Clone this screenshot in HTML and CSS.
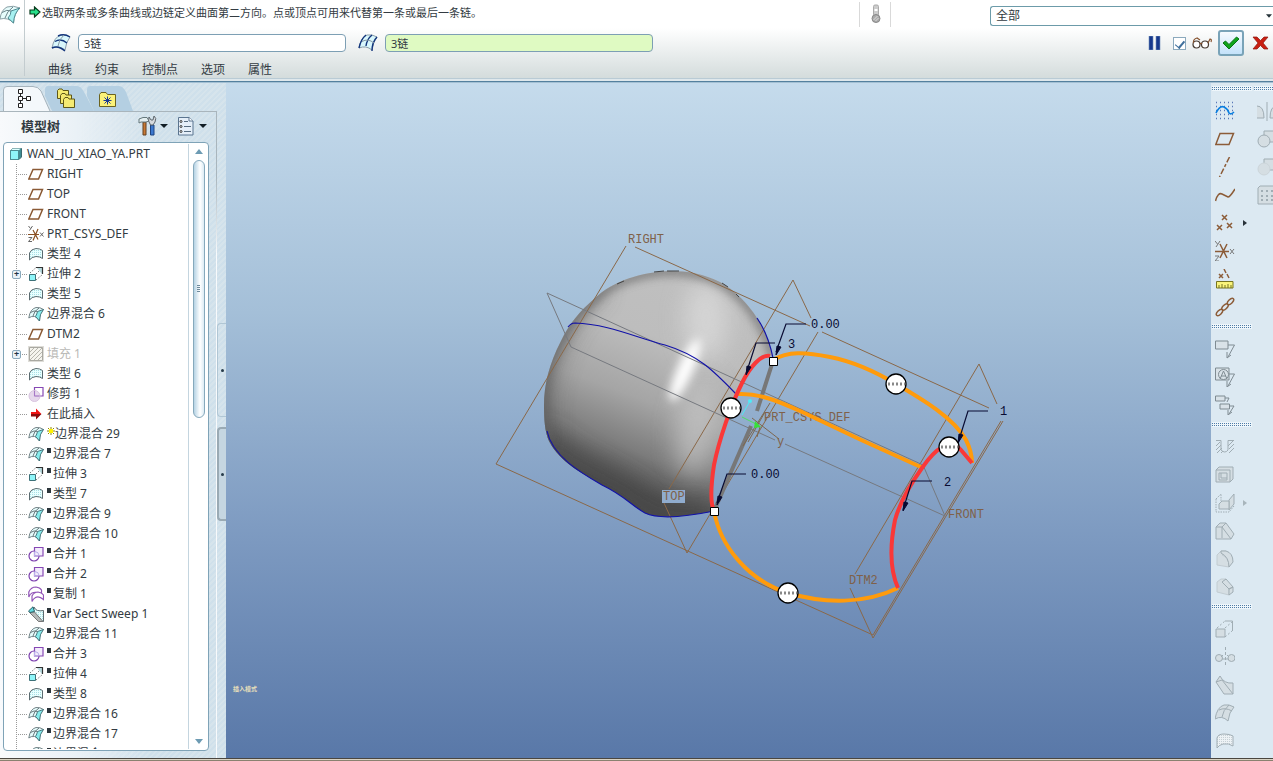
FILE: index.html
```html
<!DOCTYPE html>
<html lang="zh-CN">
<head>
<meta charset="utf-8">
<title>WAN_JU_XIAO_YA.PRT</title>
<link rel="stylesheet" href="styles.css">
</head>
<body>
<svg class="defs" aria-hidden="true">
  <defs>
    <pattern id="dots" width="2" height="2" patternUnits="userSpaceOnUse"><rect width="2" height="2" fill="#e8ffff"/><rect width="1" height="1" fill="#a9dfe4"/></pattern>
    <pattern id="graydots" width="2" height="2" patternUnits="userSpaceOnUse"><rect width="2" height="2" fill="#edf2f5"/><rect width="1" height="1" fill="#c6d0d6"/></pattern>
  </defs>
  <symbol id="i-part" viewBox="0 0 16 16"><path d="M2.500 4.500L5 2.500H13.500V11L11 13.500H2.500Z" fill="#3f8d94" stroke="#3a6a70"/><path d="M2.500 4.500H10.500V13.500H2.500Z" fill="#8ff5f8" stroke="#4c8c92"/><path d="M3 4L5 2.500H13L11 4Z" fill="#dff"/></symbol>
  <symbol id="i-plane" viewBox="0 0 16 16"><path d="M5 3.500H14.500L10.500 13H.800Z" fill="none" stroke="#8a5a35" stroke-width="1.500"/></symbol>
  <symbol id="i-csys" viewBox="0 0 16 16"><path d="M0 8.500H11M5 4L10 13.500M10 3L5 14.500" stroke="#8a5022" stroke-width="1.200"/><path d="M.500 0L2.500 2.500M4.500 0L1.500 4.500M12 6.500L15.500 10.500M15.500 6.500L12 10.500M.500 11.500H4L.500 15.500H4" fill="none" stroke="#666"/></symbol>
  <symbol id="i-style" viewBox="0 0 16 16"><path d="M1.500 14V7Q3 3 8 2.500Q12 2.500 14.500 4.500V12.500Q12 10.500 8 10.500Q3.500 11 1.500 14Z" fill="url(#dots)" stroke="#5b6b70"/></symbol>
  <symbol id="i-extrude" viewBox="0 0 16 16"><path d="M1.500 8.500H7.500V14.500H1.500Z" fill="#8ff5f8" stroke="#3d7078"/><path d="M2 7L8 1.500M8 14L14 9M8 8L13 3" fill="none" stroke="#777" stroke-dasharray="1.500 1.500"/><path d="M9 2H14V8Z" fill="#b9dce0"/><path d="M8 1.500H14.500V8" fill="none" stroke="#333" stroke-width="1.200"/></symbol>
  <symbol id="i-blend" viewBox="0 0 16 16"><path d="M.800 12Q2 3 8 1.500Q12 1 15.500 3.500Q11 7 11.500 15Q9 11 6.500 10.500Q3 10 .800 12Z" fill="#e6fcfc" stroke="#66777c" stroke-width=".900"/><path d="M9.500 5.500L15.500 3.500Q11.500 8 11.500 15L7.500 10.500Q9 8 9.500 5.500Z" fill="#86ecec" stroke="#3d6c74" stroke-width=".900"/><path d="M2.500 6.500Q6 4 9.500 5.500M5 10Q6 5 11 2" fill="none" stroke="#59686d" stroke-width=".900"/></symbol>
  <symbol id="i-fill" viewBox="0 0 16 16"><path d="M0 0H16V16H0Z" fill="#deddd8"/><path d="M1.500 1.500H14.500V14.500H1.500Z" fill="#f5f4ee" stroke="#aaa9a2"/><path d="M2 6L6 2M2 10L10 2M2 14L14 2M6 14L14 6M10 14L14 10" stroke="#b6b5ad"/></symbol>
  <symbol id="i-trim" viewBox="0 0 16 16"><path d="M6.500 1.500H15V10H6.500Z" fill="#fff" stroke="#8648b4" stroke-width="1.200"/><circle cx="6.500" cy="10" r="5.500" fill="#ddcbe6" fill-opacity=".75" stroke="#d8c4df"/><path d="M6.500 5V10H11.500" fill="none" stroke="#a778c6"/></symbol>
  <symbol id="i-merge" viewBox="0 0 16 16"><circle cx="6" cy="10" r="5" fill="#fff" stroke="#7c3fae" stroke-width="1.200"/><path d="M6.500 1.500H15V10H6.500Z" fill="#f3ecfc" stroke="#8648b4" stroke-width="1.200"/><path d="M7 5.500Q11 6 11 9.500M6.500 5.500V10H10.500" fill="none" stroke="#b8b2ea"/></symbol>
  <symbol id="i-copy" viewBox="0 0 16 16"><path d="M.800 11V6Q3 1 8 1Q12 1.500 13.500 4V9Q9 5 4 7Q2 8 .800 11Z" fill="#fff" stroke="#9255b8" stroke-width="1.200"/><path d="M4 15.500V10Q6 6 10 6Q14 6.500 15.500 9V13.500Q11 9.500 7.500 11.500Q5 13 4 15.500Z" fill="#fff" stroke="#9255b8" stroke-width="1.200"/></symbol>
  <symbol id="i-sweep" viewBox="0 0 16 16"><path d="M6 1Q8 6 15.500 4.500V15.500H11L5 6Z" fill="url(#dots)" stroke="#5b6b70"/><path d="M1 6L6.500 6L15 15.500H10.500Z" fill="#b5b9b9" stroke="#777"/><path d="M.500 5L5 .800L6.500 5.500L2 6.500Z" fill="#63dce2" stroke="#2f5f66"/></symbol>
  <symbol id="i-insert" viewBox="0 0 16 16"><path d="M3 6H8V2.500L13.500 8H3Z" fill="#f11414"/><path d="M3 8H13.500L8 13.500V10.500H3Z" fill="#8c0b0b"/></symbol>
  <symbol id="i-chainA" viewBox="0 0 20 20"><path d="M1 15Q3 4 10 2Q15 1 19 4Q15 9 14 17Q8 12 1 15Z" fill="#d9f7fc" stroke="#8b9daa"/><path d="M7 3Q13 0 19 4M4 8.500Q10 5 16 10M1 15Q7 12 14 18" fill="none" stroke="#12357c" stroke-width="1.400"/><path d="M7 13Q8 6 13 2" fill="none" stroke="#8799a6"/></symbol>
  <symbol id="i-chainB" viewBox="0 0 20 20"><path d="M1 15Q3 4 9 2Q14 1 19 4Q15 9 14 17Q8 12 1 15Z" fill="#d9f7fc" stroke="#8b9daa"/><path d="M1 15Q3 6 8 2M8 13Q9 6 14 2M14 18Q14 9 19 4" fill="none" stroke="#12357c" stroke-width="1.400"/><path d="M4 8.500Q10 5 16 10" fill="none" stroke="#8799a6"/></symbol>
</svg>

<header class="dashboard">
  <div class="feature-mark"><svg class="icon20" viewBox="0 0 20 20"><path d="M0 14Q1 5 7 2Q13 0 20 3Q14 8 13.500 18Q8 12 0 14Z" fill="#e6fcfc" stroke="#8aa0a6"/><path d="M11 6L20 3Q14 8 13.500 18L8 13Q11 10 11 6Z" fill="#a6f0f0" stroke="#4f8b92"/><path d="M2 7.500Q7 4 11 6M5 13Q7 6 13 2" fill="none" stroke="#6a8389"/></svg></div>
  <div class="dash-body">
    <div class="row message-row">
      <svg class="go" viewBox="0 0 12 12"><path d="M1 4H5.500V1L11 6L5.500 11V8H1Z" fill="#27e08a" stroke="#073b1b" stroke-width="1.200"/></svg>
      <p class="message">选取两条或多条曲线或边链定义曲面第二方向。点或顶点可用来代替第一条或最后一条链。</p>
      <div class="status-light"><svg viewBox="0 0 12 20"><rect x="4" y="1" width="5" height="11" rx="1.500" fill="#ccc" stroke="#aaa"/><path d="M5 6H8" stroke="#fff" stroke-width="2"/><circle cx="6.500" cy="14.500" r="4" fill="#aaa" stroke="#888"/><path d="M4 16L8 12M6 17L9 14" stroke="#ddd"/></svg></div>
      <label class="filter"><select aria-label="过滤器"><option>全部</option></select><svg class="caret" viewBox="0 0 7 4"><path d="M0 0H7L3.500 4Z" fill="#253238"/></svg></label>
    </div>
    <div class="row collector-row">
      <svg class="icon20"><use href="#i-chainA"/></svg>
      <input class="collector" aria-label="第一方向" value="3链">
      <svg class="icon20 second"><use href="#i-chainB"/></svg>
      <input class="collector active" aria-label="第二方向" value="3链">
      <div class="controls">
        <button class="plain" aria-label="暂停"><svg width="13" height="14" viewBox="0 0 13 14"><path d="M1 0H5V14H1ZM8 0H12V14H8Z" fill="#16388c" stroke="#7391bd" stroke-width=".600"/></svg></button>
        <label class="preview"><input type="checkbox" checked aria-label="预览"><svg width="20" height="12" viewBox="0 0 20 12"><circle cx="4.500" cy="7.500" r="3.500" fill="#fff" stroke="#453930" stroke-width="1.200"/><circle cx="13" cy="7.500" r="3.500" fill="#fff" stroke="#453930" stroke-width="1.200"/><path d="M8 7Q9 5.500 10 7M1.500 6Q1 2 5 1L8 3M16 6L18 2Q20 2 19 5" fill="none" stroke="#86522e" stroke-width="1.200"/></svg></label>
        <button class="ok" aria-label="确定"><svg width="18" height="14" viewBox="0 0 18 14"><path d="M1 7L3.500 5L7 8.500L14.500 1L17 3L7 13Z" fill="#10a51c" stroke="#087316"/></svg></button>
        <button class="plain" aria-label="取消"><svg width="17" height="14" viewBox="0 0 17 14"><path d="M1 1H5L8.500 4.500L12 1H16L11 7L16 13H12L8.500 9.500L5 13H1L6 7Z" fill="#c91f12" stroke="#8e160d" stroke-width=".700"/></svg></button>
      </div>
    </div>
    <nav class="row tabs-row"><button>曲线</button><button>约束</button><button>控制点</button><button>选项</button><button>属性</button></nav>
  </div>
</header>

<main class="workspace">
  <aside class="navigator">
    <div class="nav-main">
      <div class="nav-tabs">
        <button aria-label="模型树"><svg viewBox="0 0 42 25"><path d="M.500 25V4Q.500.500 4 .500H30Q35 .500 38 5L47 25Z" fill="#f4f8fb"/><path d="M.500 25V4Q.500.500 4 .500H30Q35 .500 38 5L47 25" fill="none" stroke="#a6b4bd"/><g fill="#fff" stroke="#222"><path d="M17.500 7V17M18 12.500H24" /><path d="M15.500 3.500H19.500V7.500H15.500ZM15.500 10.500H19.500V14.500H15.500ZM15.500 17.500H19.500V21.500H15.500ZM23.500 10.500H27.500V14.500H23.500Z"/></g></svg></button>
        <button aria-label="文件夹浏览器"><svg viewBox="0 0 42 25"><path d="M0 4Q0 0 3 0H32Q36 0 39 6L49 25H7L0 10Z" fill="#b4cfe2"/><g fill="#f5ea72" stroke="#5f5718"><path d="M12.500 4.500L14 3H17L18 4.500H23.500V12.500H12.500Z"/><path d="M15.500 9.500L17 7.500H20L21 9H26.500V17.500H15.500Z"/><path d="M18.500 13.500L20 11.500H23L24 13H29.500V21.500H18.500Z"/></g></svg></button>
        <button aria-label="收藏夹"><svg viewBox="0 0 42 25"><path d="M0 4Q0 0 3 0H32Q36 0 39 6L46 25H7L0 10Z" fill="#b4cfe2"/><path d="M12.500 8.500L14 6.500H19L20.500 8.500H28.500V20.500H12.500Z" fill="#fbf279" stroke="#6b6320"/><path d="M20.500 10.500V18.500M16.500 14.500H24.500M17.500 11.500L23.500 17.500M23.500 11.500L17.500 17.500" stroke="#193a93"/></svg></button>
      </div>
      <section class="tree-panel">
        <div class="tree-head">
          <h2>模型树</h2>
          <button aria-label="设置"><svg width="30" height="20" viewBox="0 0 30 20"><path d="M5 6H8V19H5Z" fill="#c97934" stroke="#634023"/><path d="M1 7V3L5 1.500H9L11 5L8 6H3Z" fill="#e3eef0" stroke="#66787c"/><path d="M12.500 9H16V19H12.500Z" fill="#3b78cf" stroke="#1e4481"/><path d="M11 1L13 4H15L16 0Q19 2 17 6L15 9H12.500Q9.500 5 11 1Z" fill="#d6dade" stroke="#5e676d"/><path d="M22 8H30L26 12Z" fill="#111d25"/></svg></button>
          <button aria-label="显示"><svg width="30" height="20" viewBox="0 0 30 20"><path d="M1.500 1.500H12L16 5V19H1.500Z" fill="#e4eef8" stroke="#5b7590"/><path d="M12 1.500V5H16" fill="#fff" stroke="#5b7590"/><path d="M7 5.500H11M7 10.500H14M7 15.500H14" stroke="#566c80"/><g fill="#fff" stroke="#333"><circle cx="4" cy="5.500" r="1"/><circle cx="4" cy="10.500" r="1"/><circle cx="4" cy="15.500" r="1"/></g><path d="M22 8H30L26 12Z" fill="#111d25"/></svg></button>
        </div>
        <div class="tree-box">
          <div class="tree">
            <div class="root"><svg><use href="#i-part"/></svg>WAN_JU_XIAO_YA.PRT</div>
            <ul>
              <li><svg><use href="#i-plane"/></svg>RIGHT</li>
              <li><svg><use href="#i-plane"/></svg>TOP</li>
              <li><svg><use href="#i-plane"/></svg>FRONT</li>
              <li><svg><use href="#i-csys"/></svg>PRT_CSYS_DEF</li>
              <li><svg><use href="#i-style"/></svg>类型 4</li>
              <li class="closed"><button aria-label="展开">+</button><svg><use href="#i-extrude"/></svg>拉伸 2</li>
              <li><svg><use href="#i-style"/></svg>类型 5</li>
              <li><svg><use href="#i-blend"/></svg>边界混合 6</li>
              <li><svg><use href="#i-plane"/></svg>DTM2</li>
              <li class="closed off"><button aria-label="展开">+</button><svg><use href="#i-fill"/></svg>填充 1</li>
              <li><svg><use href="#i-style"/></svg>类型 6</li>
              <li><svg><use href="#i-trim"/></svg>修剪 1</li>
              <li><svg><use href="#i-insert"/></svg>在此插入</li>
              <li><svg><use href="#i-blend"/></svg><svg class="fresh" viewBox="0 0 8 8"><path d="M4 0V8M0 4H8M1 1L7 7M7 1L1 7" stroke="#8d8700"/><path d="M2 2H6V6H2Z" fill="#fff200"/></svg>边界混合 29</li>
              <li><svg><use href="#i-blend"/></svg><i></i>边界混合 7</li>
              <li><svg><use href="#i-extrude"/></svg><i></i>拉伸 3</li>
              <li><svg><use href="#i-style"/></svg><i></i>类型 7</li>
              <li><svg><use href="#i-blend"/></svg><i></i>边界混合 9</li>
              <li><svg><use href="#i-blend"/></svg><i></i>边界混合 10</li>
              <li><svg><use href="#i-merge"/></svg><i></i>合并 1</li>
              <li><svg><use href="#i-merge"/></svg><i></i>合并 2</li>
              <li><svg><use href="#i-copy"/></svg><i></i>复制 1</li>
              <li><svg><use href="#i-sweep"/></svg><i></i>Var Sect Sweep 1</li>
              <li><svg><use href="#i-blend"/></svg><i></i>边界混合 11</li>
              <li><svg><use href="#i-merge"/></svg><i></i>合并 3</li>
              <li><svg><use href="#i-extrude"/></svg><i></i>拉伸 4</li>
              <li><svg><use href="#i-style"/></svg><i></i>类型 8</li>
              <li><svg><use href="#i-blend"/></svg><i></i>边界混合 16</li>
              <li><svg><use href="#i-blend"/></svg><i></i>边界混合 17</li>
              <li><svg><use href="#i-blend"/></svg><i></i>边界混合 1</li>
            </ul>
          </div>
          <div class="scroll">
            <svg viewBox="0 0 8 5"><path d="M0 5H8L4 0Z" fill="#6d9bb3"/></svg>
            <div class="thumb"><span></span></div>
            <svg class="down" viewBox="0 0 8 5"><path d="M0 0H8L4 5Z" fill="#6d9bb3"/></svg>
          </div>
        </div>
      </section>
    </div>
    <div class="sashes"><span></span><span class="pressed"></span></div>
  </aside>

  <section class="viewport">
    <svg class="scene" viewBox="226 83 985 675" preserveAspectRatio="xMidYMid slice">
      <defs>
        <path id="outline" d="M773 358C770 343 766 331 757 318C749 305 736 291 720 282C704 274 688 271 670 271C641 272 613 281 595 298C580 311 569 324 561 341C549 364 544 385 544 406C544 420 545 432 549 441C560 463 584 474 602 485C625 496 632 506 645 513C658 519 685 517 714 511C711 503 711 485 714 465C719 440 731 405 742 383C750 367 758 353 765 355Q770 353 773 358Z"/>
        <clipPath id="body"><use href="#outline"/></clipPath>
        <linearGradient id="base" x1="700" y1="271" x2="610" y2="510" gradientUnits="userSpaceOnUse"><stop offset="0" stop-color="#c0c0c0"/><stop offset=".3" stop-color="#bdbdbd"/><stop offset=".55" stop-color="#a5a5a5"/><stop offset=".75" stop-color="#7c7c7c"/><stop offset=".9" stop-color="#505050"/><stop offset="1" stop-color="#4c4c4c"/></linearGradient>
        <filter id="soft" filterUnits="userSpaceOnUse" x="500" y="230" width="320" height="330"><feGaussianBlur stdDeviation="12"/></filter>
        <filter id="fine" filterUnits="userSpaceOnUse" x="500" y="230" width="320" height="330"><feGaussianBlur stdDeviation="5"/></filter>
        <g id="arrow"><path d="M0 8L1-1L5 0Z" fill="#080b32" stroke="#080b32"/></g>
        <g id="knob"><circle r="10" fill="#fff" stroke="#000" stroke-width="1.300"/><path d="M-8 0H9" stroke="#888" stroke-width="3" stroke-dasharray="2 2"/></g>
      </defs>
      <g clip-path="url(#body)">
        <rect x="540" y="265" width="240" height="260" fill="url(#base)"/>
        <path d="M600 285C570 305 545 350 540 400V450" fill="none" stroke="#555" stroke-width="18" opacity=".6" filter="url(#soft)"/>
        <path d="M540 435C570 470 625 480 655 515H715" fill="none" stroke="#454545" stroke-width="22" opacity=".8" filter="url(#soft)"/>
        <ellipse cx="697" cy="425" rx="20" ry="50" transform="rotate(8 697 425)" fill="#c4c4c4" opacity=".75" filter="url(#soft)"/>
        <ellipse cx="706" cy="320" rx="22" ry="40" fill="#dedede" opacity=".7" filter="url(#soft)"/>
        <ellipse cx="685" cy="370" rx="8" ry="34" transform="rotate(24 685 370)" fill="#fff" filter="url(#fine)"/>
        <path d="M549 441C540 400 545 364 561 341C569 324 580 311 595 298C613 281 641 272 670 271C688 271 704 274 720 282C736 291 749 305 757 318C766 331 770 343 773 358" fill="none" stroke="#606060" stroke-width="8" opacity=".75" filter="url(#fine)"/>
      </g>
      <path d="M617 284L624 281M654 272L664 271M667 271H679M722 283L728 287M736 294L739 297" stroke="#444" fill="none"/>
      <g fill="none" stroke="#8a6848">
        <path d="M626 246L496 464L873 635L1001 421M1003 421L873 638L850 588M635 247L810 326M822 332L989 408"/>
        <path d="M811 318L793 280L669 489M664 503L687 553L818 332M997 404L979 364L855 574"/>
      </g>
      <g fill="none" stroke="#76797f">
        <path d="M571 347L547 293L923 465L945 516L785 444M571 347L775 440"/>
      </g>
      <g fill="none" stroke="#1212a8" stroke-width="1.200">
        <path d="M568 327Q571 323 575 323C607 324 635 337 665 345C698 355 713 370 736 394M757 318C766 331 770 343 773 358M547 431C552 456 581 473 602 485C625 496 632 506 645 513C658 519 685 517 714 511"/>
      </g>
      <path d="M773 361L757 411M751 426L714 511" stroke="#777" stroke-width="4" fill="none"/>
      <path d="M743 446L770 403M748 442L765 412M752 418L779 439M760 427L757 437" stroke="#7d674f" fill="none"/>
      <g class="cad brown"><text x="764" y="421">PRT_CSYS_DEF</text><text x="777" y="445">y</text></g>
      <g fill="none" stroke="#ff9b0c" stroke-width="4">
        <path d="M773 360C788 351 805 352 830 357C855 362 876 372 896 384C922 399 954 418 966 440Q972 452 972 463"/>
        <path d="M738 394C760 393 780 402 800 411Q860 440 923 468"/>
        <path d="M714 511C720 545 747 580 788 593C825 604 865 604 898 588"/>
      </g>
      <g fill="none" stroke="#fa3838" stroke-width="4">
        <path d="M714 511C710 503 711 485 714 465C719 440 731 405 742 383C750 367 761 354 770 356"/>
        <path d="M898 588C890 570 890 545 895 520C900 502 912 482 922 468C935 449 950 437 961 450L972 463"/>
      </g>
      <path d="M742 415L750 401" stroke="#4deaf5"/><circle cx="750" cy="401" r="2" fill="#4deaf5"/>
      <path d="M742 417L758 425" stroke="#4edc66"/><path d="M755 421L761 427L754 428Z" fill="#37e037"/>
      <g fill="none" stroke="#080b32" stroke-width="1.200"><path d="M776 352L786 324H806M746 374L756 343H775M717 503L727 474H746M958 443L968 411H988M903 510L912 481H932"/></g>
      <use href="#arrow" x="776" y="347"/><use href="#arrow" x="746" y="367"/><use href="#arrow" x="717" y="497"/><use href="#arrow" x="958" y="435"/><use href="#arrow" x="903" y="503"/>
      <g class="cad navy"><text x="811" y="328">0.00</text><text x="751" y="478">0.00</text><text x="788" y="348">3</text><text x="1000" y="415">1</text><text x="944" y="486">2</text></g>
      <rect x="662" y="490" width="23" height="13" fill="#90acce"/>
      <g class="cad brown"><text x="628" y="243">RIGHT</text><text x="663" y="500">TOP</text><text x="948" y="518">FRONT</text><text x="849" y="584">DTM2</text></g>
      <use href="#knob" x="731" y="408"/><use href="#knob" x="896" y="384"/><use href="#knob" x="949" y="447"/><use href="#knob" x="788" y="593"/>
      <path d="M769.500 357.500H777.500V365.500H769.500ZM710.500 507.500H718.500V515.500H710.500Z" fill="#fff" stroke="#000"/>
      <text class="mode" x="233" y="691">插入模式</text>
    </svg>
  </section>

  <aside class="toolbars">
    <div class="toolbar">
      <hr>
      <div class="group brownish">
        <button aria-label="草绘"><svg viewBox="0 0 20 20"><path d="M1 1.500H20M1 5.500H20M1 9.500H20M1 13.500H20M1 17.500H20" stroke="#5878b8" stroke-dasharray="1 3"/><path d="M1 12Q5 4 9 6T14 12Q16 14 19 11" stroke="#0a7fe0" stroke-width="1.600"/></svg></button>
        <button aria-label="平面"><svg viewBox="0 0 20 20"><path d="M5 4.500H18.500L14 15.500H.800Z"/></svg></button>
        <button aria-label="轴"><svg viewBox="0 0 20 20"><path d="M14.500 0L4.500 20" stroke-dasharray="6 2 3 2"/></svg></button>
        <button aria-label="曲线"><svg viewBox="0 0 20 20"><path d="M.500 16Q3 7 7 9T13 12Q15 12 20 4"/></svg></button>
        <button class="more" aria-label="点"><svg viewBox="0 0 20 20"><path d="M7 2L12 7M12 2L7 7M2 12L7 17M7 12L2 17M12 10L17 15M17 10L12 15"/></svg><svg class="tri" viewBox="0 0 4 6"><path d="M0 0L4 3L0 6Z"/></svg></button>
        <button aria-label="坐标系"><svg viewBox="0 0 20 20"><path d="M0 10.500H14M5 3L12 17M12 3L5 17"/><path stroke="#777" stroke-width="1" d="M0 0L2.500 3M5 0L1 6M15 8L19 13M19 8L15 13M0 15H4L0 20H4"/></svg></button>
        <button aria-label="分析"><svg viewBox="0 0 20 20"><path d="M4 5L8 9M8 5L4 9M9 0L11 4M12 5L14 9"/><path d="M1.500 12.500H18V19H1.500Z" fill="#faf47a" stroke="#777421" stroke-width="1"/><path d="M4 19V16M7 19V15M10 19V16M13 19V15M16 19V16" stroke="#777421" stroke-width="1"/></svg></button>
        <button aria-label="参照"><svg viewBox="0 0 20 20"><ellipse cx="4.500" cy="15.500" rx="4" ry="2" transform="rotate(-45 4.500 15.500)"/><ellipse cx="10" cy="10" rx="4" ry="2" transform="rotate(-45 10 10)"/><ellipse cx="15.500" cy="4.500" rx="4" ry="2" transform="rotate(-45 15.500 4.500)"/></svg></button>
      </div>
      <hr>
      <div class="group grey">
        <button aria-label="注释"><svg viewBox="0 0 20 20"><path d="M.500 2H13V10H.500Z"/><path class="line" d="M13 6H19.500L13 18M12 13V19L16 16"/></svg></button>
        <button aria-label="注释特征"><svg viewBox="0 0 20 20"><path d="M.500 1H14V13H.500Z"/><circle cx="8.500" cy="7.500" r="5"/><path class="line" d="M14 7H19.500L13 19M12 14V20L16 17M5 12L8.500 4L12 12M6 9H11"/></svg></button>
        <button aria-label="传播"><svg viewBox="0 0 20 20"><path d="M.500 1H10V6H.500ZM5 9H14.500V14H5Z"/><path class="line" d="M10 3H14L12 7M15 11H19L14 19M13 15V20L17 17"/></svg></button>
      </div>
      <hr>
      <div class="group grey faded">
        <button aria-label="孔"><svg viewBox="0 0 20 20"><path class="line" d="M1 9L5 5M1 13L6 8M2 16L7 11M6 16L8 14M13 9L18 4M14 12L19 7M14 16L19 11M1 3.500H6V13Q10 17 13 13V3.500H19"/></svg></button>
        <button aria-label="壳"><svg viewBox="0 0 20 20"><path d="M1 5L4 2H18V14L15 17H1ZM1 5H15V17"/><path d="M4 8H12V15H4ZM6 8V13H12"/></svg></button>
        <button class="more" aria-label="筋"><svg viewBox="0 0 20 20"><path class="line" stroke-dasharray="1.500 1" d="M1 6V19H14L19 13M1 6L6 1V9"/><path d="M14 17V7L19 1V11Z"/><path d="M4 16V11L7 8H14V16Z"/></svg><svg class="tri" viewBox="0 0 4 6"><path d="M0 0L4 3L0 6Z"/></svg></button>
        <button aria-label="拔模"><svg viewBox="0 0 20 20"><path d="M1 17V6L5 2H11L19 13L16 18H1Z"/><path class="line" d="M7 17V6L16 18M7 6L11 2M1 6H7"/></svg></button>
        <button aria-label="倒圆角"><svg viewBox="0 0 20 20"><path class="bare" d="M2 16V6L6 2H11L7 6Q14 8 14 18Z"/><path d="M6 2H11Q18 4 18 13L14 18Q14 8 6 4Z"/></svg></button>
        <button aria-label="倒角"><svg viewBox="0 0 20 20"><path class="bare" d="M2 15V5L6 2H11L7 5L14 12V18Z"/><path d="M7 5L11 2L18 10L14 12ZM14 12L18 10V15L14 18Z"/></svg></button>
      </div>
      <hr>
      <div class="group grey faded">
        <button aria-label="拉伸"><svg viewBox="0 0 20 20"><path d="M1 10H10V18H1Z"/><path class="line" d="M2 9L10 2M10 18L17 12M10 9L17 3" stroke-dasharray="2 2"/><path class="line" d="M10 2H17.500V12"/></svg></button>
        <button aria-label="旋转"><svg viewBox="0 0 20 20"><path d="M10.500 0V20" stroke-dasharray="3 2"/><circle cx="4" cy="11" r="3.500"/><circle cx="16.500" cy="11" r="3.500"/><path class="line" d="M8 8L6 10M12 8L14 10M7 12H13"/></svg></button>
        <button aria-label="可变截面扫描"><svg viewBox="0 0 20 20"><path d="M5 1Q9 9 18 8V19H9L1 7ZM1 7L7 5L18 19"/></svg></button>
        <button aria-label="边界混合"><svg viewBox="0 0 20 20"><path d="M0 16Q2 4 9 2Q14 1 19 4Q14 9 13 18Q7 12 0 16Z"/><path class="line" d="M4 7Q10 4 17 8M7 14Q8 7 14 2"/></svg></button>
        <button aria-label="造型"><svg viewBox="0 0 20 20"><path class="mesh" d="M2 17V7Q3 3 9 3Q15 3 18 5V15Q14 12 8 13Q4 14 2 17Z"/></svg></button>
      </div>
    </div>
    <div class="toolbar">
      <hr>
      <div class="group grey faded">
        <button aria-label="镜像"><svg viewBox="0 0 20 20"><path d="M0 5Q7 5 7 17H0M10 1V20M20 5Q13 5 13 17H20"/></svg></button>
        <button aria-label="合并"><svg viewBox="0 0 20 20"><path d="M7 2H20V13H7Z"/><circle cx="7" cy="12" r="6"/></svg></button>
        <button aria-label="修剪"><svg viewBox="0 0 20 20"><path d="M7 2H20V13H7Z"/><circle cx="7" cy="12" r="6" stroke="#ccd5da"/></svg></button>
        <button aria-label="阵列"><svg viewBox="0 0 20 20"><path d="M1 3L3 1H20V19H1Z"/><path d="M4 6H20M4 11H20M4 15H20" stroke-width="2" stroke-dasharray="2 3"/></svg></button>
      </div>
    </div>
  </aside>
</main>
<footer class="edge"></footer>
</body>
</html>
```

FILE: styles.css
```css
* { box-sizing: border-box; }
body {
  margin: 0;
  height: 100vh;
  display: flex;
  flex-direction: column;
  overflow: hidden;
  font: 12px/20px "Noto Sans", "Noto Sans CJK SC", sans-serif;
  color: #333b42;
}
.defs { width: 0; height: 0; position: absolute; }
button { border: 0; padding: 0; margin: 0; background: none; font: inherit; color: inherit; }
svg { flex: none; display: block; }
.icon20 { width: 20px; height: 20px; }

.dashboard {
  flex: none;
  display: flex;
  height: 83px;
  background: linear-gradient(#fff 0 28px, #d4dcdc 78px, #b9cbd5 78px 79px, #dfe8ec 79px 81px, #54809e 81px 82px, #a4c0d3 82px);
}
.feature-mark {
  width: 25px;
  height: 76px;
  padding-top: 5px;
  border-right: 1px solid #c3cccf;
}
.dash-body { flex: 1; min-width: 0; }
.row { display: flex; align-items: center; }
.message-row { height: 28px; padding-left: 4px; }
.go { width: 12px; height: 12px; margin-bottom: 4px; }
.message { flex: 1; margin: 0 0 3px 1px; font-size: 11px; }
.status-light {
  width: 32px;
  height: 25px;
  border: solid #d9d9d9;
  border-width: 0 1px;
  display: flex;
  justify-content: center;
  align-items: center;
}
.status-light svg { width: 13px; height: 20px; }
.filter { display: flex; align-items: center; width: 283px; height: 20px; margin: 4px 0 0 99px; border: 1px solid #6c9ba9; border-right: 0; border-radius: 3px 0 0 3px; background: #fff; }
.filter select { flex: 1; appearance: none; border: 0; outline: 0; background: none; font: inherit; color: inherit; padding: 0 5px; height: 18px; line-height: 18px; }
.caret { width: 6px; height: 4px; margin-right: 1px; }
.collector-row { height: 30px; padding-left: 26px; }
.collector {
  width: 268px;
  height: 18px;
  margin-left: 7px;
  padding: 0 5px;
  border: 1px solid #7d9fb4;
  border-radius: 4px;
  background: #fff;
  font: 11px/16px "Noto Sans", "Noto Sans CJK SC", sans-serif;
  color: #333b42;
}
.collector.active { background: #dffac2; }
.second { margin-left: 12px; }
.controls { display: flex; align-items: center; gap: 8px; margin-left: auto; padding-right: 4px; }
.preview { display: flex; align-items: center; gap: 6px; margin: 0 -2px 0 4px; }
.preview input {
  appearance: none;
  width: 13px;
  height: 13px;
  margin: 0;
  border: 1px solid #8ba9bd;
  background: #fff;
  display: grid;
  place-items: center;
}
.preview input:checked::before { content: ""; width: 4px; height: 8px; border: solid #3f6f9c; border-width: 0 2px 1px 0; transform: rotate(40deg); }
.ok { width: 26px; height: 26px; border: 2px solid #79a3b8; border-radius: 3px; background: linear-gradient(#f5faff, #c4e2fa); display: grid; place-items: center; }
.tabs-row { height: 24px; padding-left: 23px; gap: 23px; }

.workspace { flex: 1; min-height: 0; display: flex; }
.navigator {
  width: 226px;
  flex: none;
  display: flex;
  background: repeating-linear-gradient(135deg, #cfe0eb 0 2px, #d6e4ec 2px 4px);
}
.nav-main { flex: 1; min-width: 0; display: flex; flex-direction: column; }
.nav-tabs { display: flex; height: 28px; padding: 3px 0 0 3px; flex: none; }
.nav-tabs button, .nav-tabs svg { width: 42px; height: 25px; overflow: visible; }
.tree-panel {
  flex: 1;
  min-height: 0;
  display: flex;
  flex-direction: column;
  padding: 0 7px 7px 3px;
  border: solid transparent;
  border-width: 1px 1px 0 0;
  border-image: linear-gradient(#a9b5bc 10%, transparent 22%) 1;
  background: linear-gradient(90deg, #f8fafc, #eaf1f6 35%, transparent 70%);
}
.tree-head { display: flex; align-items: center; height: 30px; padding-bottom: 2px; flex: none; padding-left: 18px; }
.tree-head h2 { flex: 1; margin: 0; font-size: 13px; line-height: 20px; }
.tree-head button:last-child { margin: 0 2px 0 9px; }
.tree-box { flex: 1; min-height: 0; display: flex; border: 1px solid #7fa3b7; border-radius: 4px; background: #fff; overflow: hidden; padding: 1px 0; }
.tree { flex: 1; overflow: hidden; white-space: nowrap; }
.tree svg { width: 16px; height: 16px; }
.root { display: flex; align-items: center; gap: 3px; height: 20px; padding-left: 4px; }
.tree ul { list-style: none; margin: 0; padding: 0; }
.tree li {
  display: flex;
  align-items: center;
  gap: 3px;
  height: 20px;
  padding-left: 24px;
  background:
    repeating-linear-gradient(90deg, #999 0 1px, transparent 1px 2px) 12px 10px / 12px 1px no-repeat,
    repeating-linear-gradient(#999 0 1px, transparent 1px 2px) 12px 0 / 1px 20px no-repeat;
}
.tree li.closed { padding-left: 8px; }
.tree li button { width: 9px; height: 9px; margin-right: 4px; border: 1px solid #8aa9bc; border-radius: 2px; background: #e9f2f8; font-size: 9px; line-height: 6px; font-weight: bold; color: #234; }
.tree li.off { color: #b9b9b6; }
.tree li i { width: 4px; height: 5px; margin: 0 -1px 8px 0; background: #2d363c; }
.tree .fresh { width: 8px; height: 8px; margin: 0 -3px 6px 0; }
.scroll { width: 20px; border-left: 1px solid #c4d5df; display: flex; flex-direction: column; align-items: center; padding: 5px 0; }
.scroll svg { width: 8px; height: 5px; }
.thumb { width: 12px; height: 258px; margin-top: 6px; border: 1px solid #86a9bc; border-radius: 6px; background: linear-gradient(90deg, #b6d3e4, #fff 60%, #dcebf4); display: grid; place-items: center; }
.thumb span { width: 3px; height: 8px; background: repeating-linear-gradient(#6e8a9c 0 1px, transparent 1px 2px); }
.down { margin-top: auto; }
.sashes { width: 9px; padding-top: 240px; display: flex; flex-direction: column; gap: 10px; }
.sashes span { height: 94px; border: 1px solid #b0c6d4; border-right: 0; border-radius: 4px 0 0 4px; display: grid; place-items: center; }
.sashes span::before { content: ""; width: 3px; height: 3px; background: #263b4a; border-radius: 50%; }
.sashes .pressed { border: 2px solid #9aaab4; border-right: 0; background: #c5d6e1; }

.viewport { flex: 1; min-width: 0; background: linear-gradient(#c5dbec, #a4bfd8 34%, #7c99c0 68%, #5978a8); overflow: hidden; }
.scene { width: 100%; height: 100%; }
.cad { font: 12px "Liberation Mono", monospace; }
.brown { fill: #7f6149; }
.navy { fill: #080b32; }
.mode { font-size: 6px; font-weight: bold; fill: #e6dfbb; }

.toolbars { flex: none; width: 62px; display: flex; gap: 2px; overflow: hidden; background: #dce9f2; padding: 3px 0 0 1px; }
.toolbar { flex: none; width: 40px; }
.toolbar hr {
  margin: 3px 0 6px;
  height: 5px;
  border: 0;
  background:
    linear-gradient(#eef6fb 0 0) 0 0 / 100% 1px no-repeat,
    linear-gradient(#eef6fb 0 0) 0 2px / 100% 1px no-repeat,
    linear-gradient(#eef6fb 0 0) 0 4px / 100% 1px no-repeat,
    repeating-linear-gradient(90deg, #4d7ba6 0 1px, #eef6fb 1px 2px);
}
.toolbar hr:first-child { margin-top: 0; }
.group { display: grid; grid-auto-rows: 28px; }
.group button { display: flex; align-items: center; padding-left: 3px; }
.group svg { width: 20px; height: 20px; fill: none; stroke-width: 1; }
.group .tri { width: 4px; height: 6px; margin-left: 8px; fill: #28323a; stroke: none; }
.group .line { fill: none; }
.group .bare { stroke: #c2ccd2; }
.group .mesh { fill: url(#graydots); }
.group.brownish svg:first-child { stroke: #8c5c38; stroke-width: 1.5; }
.grey svg { stroke: #7f8b92; fill: #d9e2e8; }
.faded svg { stroke: #a0adb4; fill: #d5dee3; }
.group.faded .tri { fill: #a8b5bc; }

.edge { flex: none; height: 3px; background: linear-gradient(#4a4640 0 1px, #d9d3c4 1px 2px, #8a8170 2px); }
```
